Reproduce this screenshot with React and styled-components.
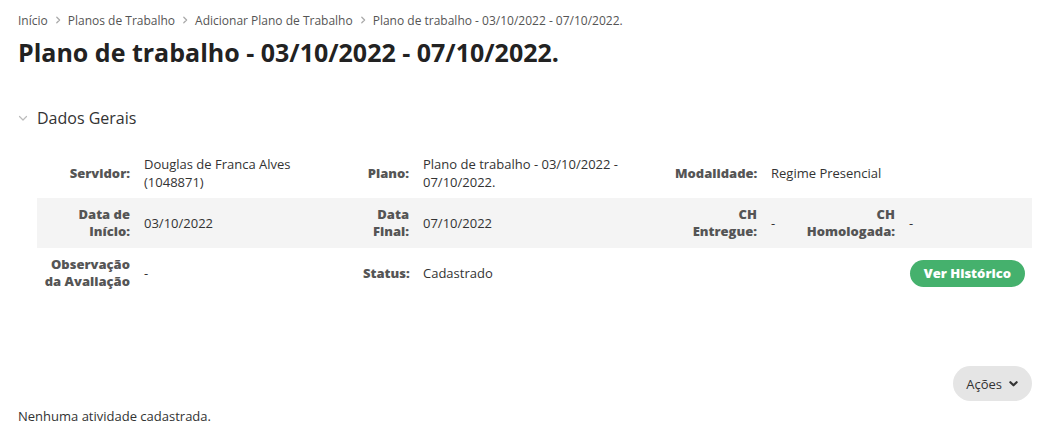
import styled, { createGlobalStyle } from 'styled-components'

const GlobalStyle = createGlobalStyle`
  body {
    margin: 0;
    background: #fff;
    font-family: 'Open Sans', 'Noto Sans', sans-serif;
    color: #333;
  }
`

const Page = styled.main`
  padding: 10px 19px 0 18px;
`

const Breadcrumb = styled.nav`
  display: flex;
  align-items: center;
  gap: 6px;
  font-size: 12px;
  color: #555;
  height: 20px;
`

const Sep = styled.span`
  color: #aaa;
  display: flex;
`

const Title = styled.h1`
  margin: 4px 0 0;
  font-size: 25px;
  font-weight: 700;
  color: #222;
  line-height: 36px;
`

const SectionHead = styled.div`
  display: flex;
  align-items: center;
  margin-top: 35px;
  height: 26px;
  font-size: 16px;
  color: #333;
`

const Caret = styled.span`
  width: 19px;
  display: flex;
  align-items: center;
  color: #bbb;
`

const Table = styled.table`
  margin: 17px 0 0 19px;
  width: calc(100% - 19px);
  border-collapse: collapse;
  table-layout: fixed;
  font-size: 13px;
`

const Row = styled.tr`
  height: 50px;
  background: ${p => (p.$striped ? '#f4f4f4' : 'transparent')};
`

const Label = styled.th`
  text-align: right;
  vertical-align: middle;
  font-weight: 800;
  color: #555;
  padding: 0 7px;
  line-height: 17px;
`

const Value = styled.td`
  vertical-align: middle;
  color: #333;
  padding: 0 7px;
  line-height: 18px;
`

const ActionCell = styled.td`
  text-align: right;
  vertical-align: middle;
  padding: 0 7px;
`

const GreenButton = styled.button`
  background: #45b16d;
  color: #fff;
  border: 0;
  border-radius: 14px;
  height: 27px;
  padding: 0 14px;
  font-family: inherit;
  font-size: 13px;
  font-weight: 800;
`

const ActionsBar = styled.div`
  display: flex;
  justify-content: flex-end;
  margin-top: 68px;
`

const GrayButton = styled.button`
  display: flex;
  align-items: center;
  gap: 7px;
  background: #e5e5e5;
  color: #333;
  border: 0;
  border-radius: 18px;
  height: 35px;
  padding: 0 14px 0 13px;
  font-family: inherit;
  font-size: 13px;
`

const Empty = styled.p`
  margin: 6px 0 0;
  font-size: 13px;
  color: #333;
`

const Chevron = ({ size = 8, dir = 'right', stroke = 1.6 }) => (
  <svg width={size} height={size} viewBox="0 0 10 10" fill="none" stroke="currentColor" strokeWidth={stroke} strokeLinecap="round" strokeLinejoin="round">
    {dir === 'right' ? <path d="M3.5 1.5 7 5l-3.5 3.5" /> : <path d="M1.5 3.5 5 7l3.5-3.5" />}
  </svg>
)

const crumbs = ['Início', 'Planos de Trabalho', 'Adicionar Plano de Trabalho', 'Plano de trabalho - 03/10/2022 - 07/10/2022.']

export default function App() {
  return (
    <Page>
      <GlobalStyle />
      <Breadcrumb>
        {crumbs.map((c, i) => (
          <span key={c} style={{ display: 'contents' }}>
            {i > 0 && <Sep><Chevron size={8} /></Sep>}
            <span>{c}</span>
          </span>
        ))}
      </Breadcrumb>
      <Title>Plano de trabalho - 03/10/2022 - 07/10/2022.</Title>

      <SectionHead>
        <Caret><Chevron size={10} dir="down" stroke={1.2} /></Caret>
        Dados Gerais
      </SectionHead>

      <Table>
        <colgroup>
          <col style={{ width: 100 }} />
          <col style={{ width: 219 }} />
          <col style={{ width: 60 }} />
          <col style={{ width: 252 }} />
          <col style={{ width: 96 }} />
          <col style={{ width: 35 }} />
          <col style={{ width: 103 }} />
          <col />
        </colgroup>
        <tbody>
          <Row>
            <Label>Servidor:</Label>
            <Value>Douglas de Franca Alves (1048871)</Value>
            <Label>Plano:</Label>
            <Value>Plano de trabalho - 03/10/2022 - 07/10/2022.</Value>
            <Label>Modalidade:</Label>
            <Value colSpan={3}>Regime Presencial</Value>
          </Row>
          <Row $striped>
            <Label>Data de Início:</Label>
            <Value>03/10/2022</Value>
            <Label>Data Final:</Label>
            <Value>07/10/2022</Value>
            <Label>CH Entregue:</Label>
            <Value>-</Value>
            <Label>CH Homologada:</Label>
            <Value>-</Value>
          </Row>
          <Row>
            <Label>Observação da Avaliação</Label>
            <Value>-</Value>
            <Label>Status:</Label>
            <Value>Cadastrado</Value>
            <ActionCell colSpan={4}>
              <GreenButton>Ver Histórico</GreenButton>
            </ActionCell>
          </Row>
        </tbody>
      </Table>

      <ActionsBar>
        <GrayButton>
          Ações <Chevron size={9} dir="down" stroke={2.4} />
        </GrayButton>
      </ActionsBar>
      <Empty>Nenhuma atividade cadastrada.</Empty>
    </Page>
  )
}
